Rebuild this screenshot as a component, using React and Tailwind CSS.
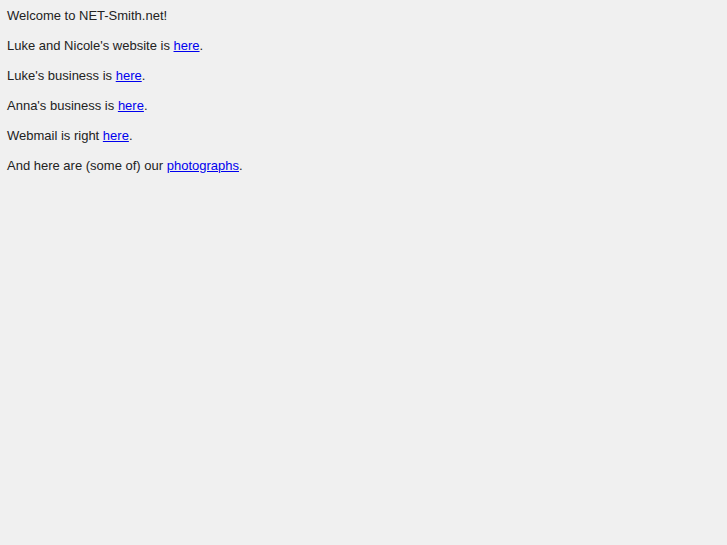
import React from 'react';

const lines = [
  { text: 'Welcome to NET-Smith.net!' },
  { text: "Luke and Nicole's website is ", link: 'here' },
  { text: "Luke's business is ", link: 'here' },
  { text: "Anna's business is ", link: 'here' },
  { text: 'Webmail is right ', link: 'here' },
  { text: 'And here are (some of) our ', link: 'photographs' },
];

export default function App() {
  return (
    <div className="min-h-screen bg-[#f0f0f0] text-[#222222] pt-2 pl-[7px] font-['Liberation_Sans',Arial,sans-serif] text-[13px] leading-[16px]">
      <div className="flex flex-col gap-[14px]">
        {lines.map((l, i) => (
          <p key={i}>
            {l.text}
            {l.link && (
              <>
                <a href="#" className="text-[#0000ee] underline">{l.link}</a>.
              </>
            )}
          </p>
        ))}
      </div>
    </div>
  );
}
